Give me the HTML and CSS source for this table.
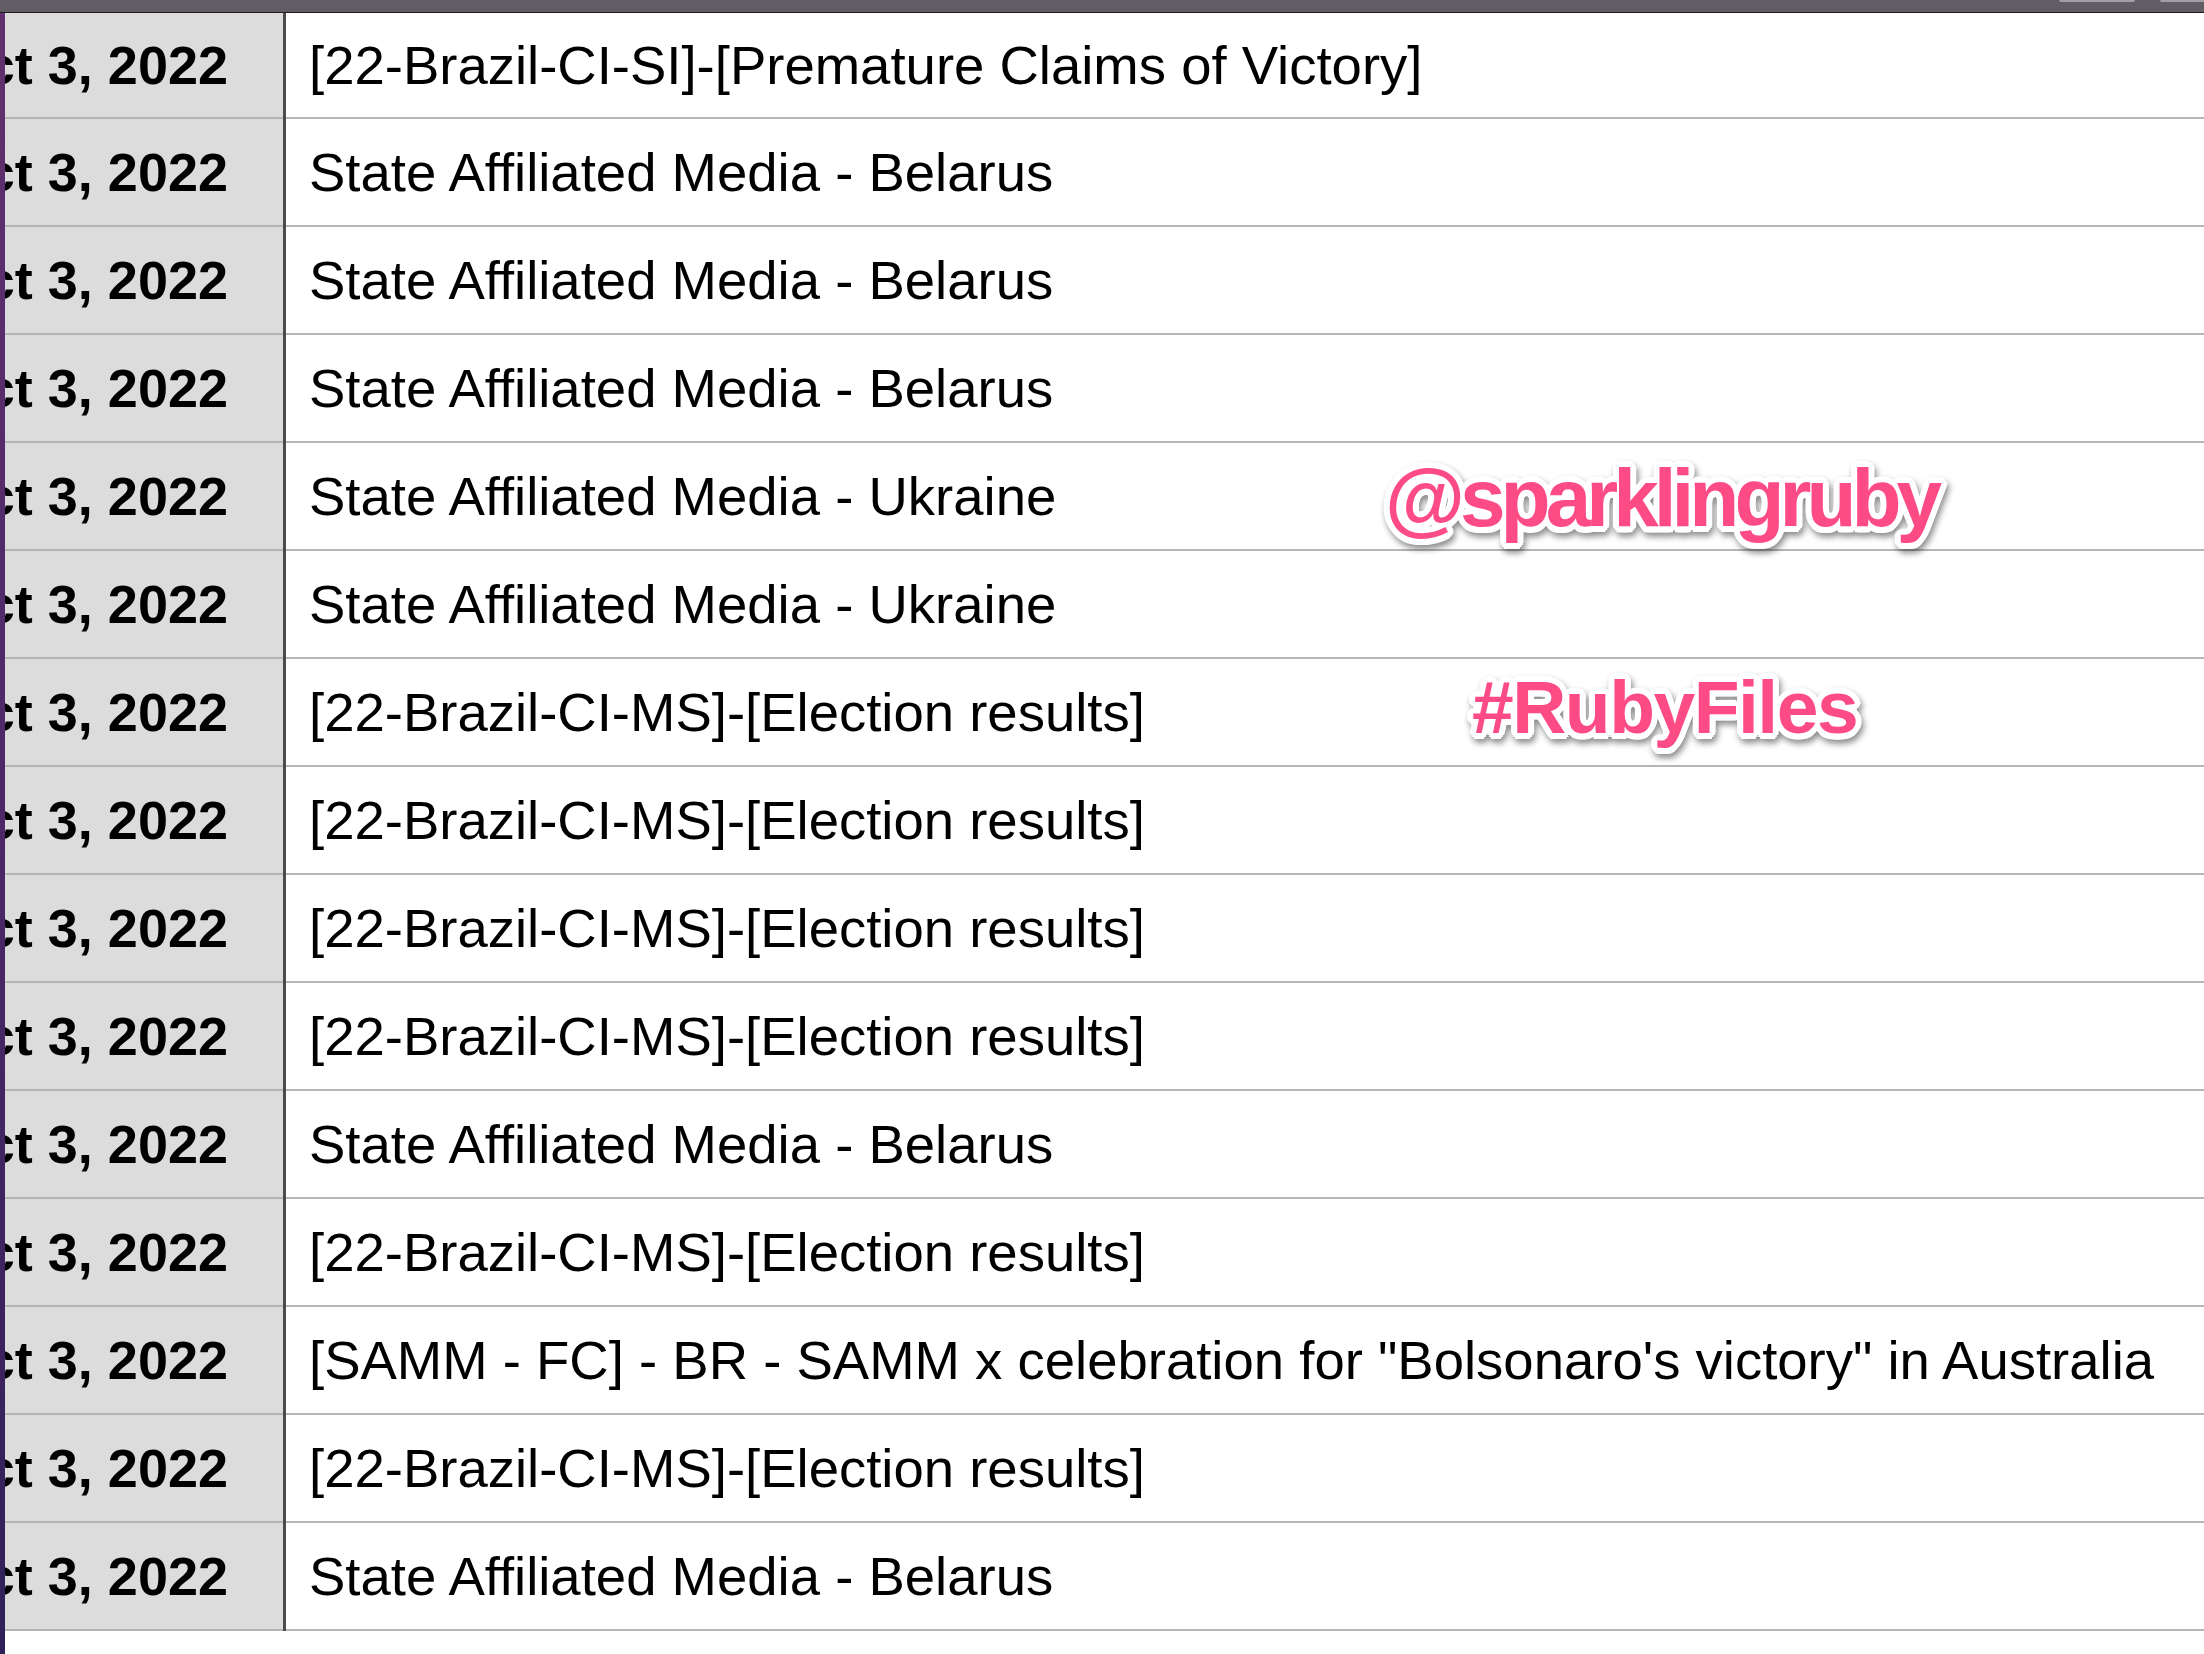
FILE: index.html
```html
<!DOCTYPE html>
<html lang="en">
<head>
<meta charset="utf-8">
<title>Sheet</title>
<link rel="stylesheet" href="styles.css">
</head>
<body>
<div class="page">
  <div class="topbar">
    <div class="tab tab-a"></div>
    <div class="tab tab-b"></div>
  </div>
  <div class="main">
    <div class="edge"></div>
    <div class="area">
      <div class="sheet">
        <div class="row first"><div class="date"><span>Oct 3, 2022</span></div><div class="text">[22-Brazil-CI-SI]-[Premature Claims of Victory]</div></div>
        <div class="row"><div class="date"><span>Oct 3, 2022</span></div><div class="text">State Affiliated Media - Belarus</div></div>
        <div class="row"><div class="date"><span>Oct 3, 2022</span></div><div class="text">State Affiliated Media - Belarus</div></div>
        <div class="row"><div class="date"><span>Oct 3, 2022</span></div><div class="text">State Affiliated Media - Belarus</div></div>
        <div class="row"><div class="date"><span>Oct 3, 2022</span></div><div class="text">State Affiliated Media - Ukraine</div></div>
        <div class="row"><div class="date"><span>Oct 3, 2022</span></div><div class="text">State Affiliated Media - Ukraine</div></div>
        <div class="row"><div class="date"><span>Oct 3, 2022</span></div><div class="text">[22-Brazil-CI-MS]-[Election results]</div></div>
        <div class="row"><div class="date"><span>Oct 3, 2022</span></div><div class="text">[22-Brazil-CI-MS]-[Election results]</div></div>
        <div class="row"><div class="date"><span>Oct 3, 2022</span></div><div class="text">[22-Brazil-CI-MS]-[Election results]</div></div>
        <div class="row"><div class="date"><span>Oct 3, 2022</span></div><div class="text">[22-Brazil-CI-MS]-[Election results]</div></div>
        <div class="row"><div class="date"><span>Oct 3, 2022</span></div><div class="text">State Affiliated Media - Belarus</div></div>
        <div class="row"><div class="date"><span>Oct 3, 2022</span></div><div class="text">[22-Brazil-CI-MS]-[Election results]</div></div>
        <div class="row"><div class="date"><span>Oct 3, 2022</span></div><div class="text">[SAMM - FC] - BR - SAMM x celebration for "Bolsonaro's victory" in Australia</div></div>
        <div class="row"><div class="date"><span>Oct 3, 2022</span></div><div class="text">[22-Brazil-CI-MS]-[Election results]</div></div>
        <div class="row"><div class="date"><span>Oct 3, 2022</span></div><div class="text">State Affiliated Media - Belarus</div></div>
      </div>
    </div>
  </div>
  <div class="mark mark-handle">@sparklingruby</div>
  <div class="mark mark-tag">#RubyFiles</div>
</div>
</body>
</html>
```

FILE: styles.css
```css
html, body {
  margin: 0;
  padding: 0;
  background: #ffffff;
}

.page {
  position: relative;
  display: flex;
  flex-direction: column;
  height: 1654px;
  overflow: hidden;
  font-family: "Liberation Sans", Arial, Helvetica, sans-serif;
  color: #000;
}

.topbar {
  flex: 0 0 auto;
  height: 12px;
  background: #625d64;
  border-bottom: 1px solid #1c1a1d;
  display: flex;
  justify-content: flex-end;
  align-items: flex-start;
  gap: 25px;
}

.tab {
  height: 2px;
  background: #a29ea4;
  border-radius: 0 0 6px 6px;
}

.tab-a { width: 76px; }
.tab-b { width: 44px; border-radius: 0 0 0 6px; }

.main {
  flex: 1 1 auto;
  display: flex;
}

.edge {
  flex: 0 0 5px;
  background: linear-gradient(to bottom, #62306f, #472665 60%, #30205a);
}

.area {
  flex: 1 1 auto;
  background: #ffffff;
}

.sheet {
  display: flex;
  flex-direction: column;
  background: linear-gradient(to right, #dcdcdc 0, #dcdcdc 278px, #4b4b4b 278px, #4b4b4b 281px, #ffffff 281px);
}

.row {
  display: flex;
  gap: 3px;
  height: 108px;
}

.row.first {
  height: 106px;
}

.date,
.text {
  box-sizing: border-box;
  border-bottom: 2px solid #b6b6b6;
  display: flex;
  align-items: center;
  white-space: nowrap;
  overflow: hidden;
}

.date {
  flex: 0 0 278px;
  justify-content: flex-end;
  padding-right: 55px;
  font-size: 54px;
  font-weight: bold;
  border-bottom-color: #b3b3b3;
}

.date span {
  flex: 0 0 auto;
}

.text {
  flex: 1 1 auto;
  padding-left: 23px;
  font-size: 54.5px;
}

.mark {
  position: absolute;
  font-family: "Liberation Sans", Arial, Helvetica, sans-serif;
  font-weight: bold;
  line-height: 1;
  color: #fd4b86;
  white-space: nowrap;
  text-shadow:
    6px 0 0 #fff, -6px 0 0 #fff, 0 6px 0 #fff, 0 -6px 0 #fff,
    4px 4px 0 #fff, -4px 4px 0 #fff, 4px -4px 0 #fff, -4px -4px 0 #fff,
    5.5px 2.3px 0 #fff, -5.5px 2.3px 0 #fff, 5.5px -2.3px 0 #fff, -5.5px -2.3px 0 #fff,
    2.3px 5.5px 0 #fff, -2.3px 5.5px 0 #fff, 2.3px -5.5px 0 #fff, -2.3px -5.5px 0 #fff;
  filter: drop-shadow(2px 4px 3px rgba(0, 0, 0, 0.45));
}

.mark-handle {
  left: 1385px;
  top: 457px;
  font-size: 82px;
  letter-spacing: -5px;
}

.mark-tag {
  left: 1472px;
  top: 670px;
  font-size: 75px;
  letter-spacing: -1.5px;
}
```
